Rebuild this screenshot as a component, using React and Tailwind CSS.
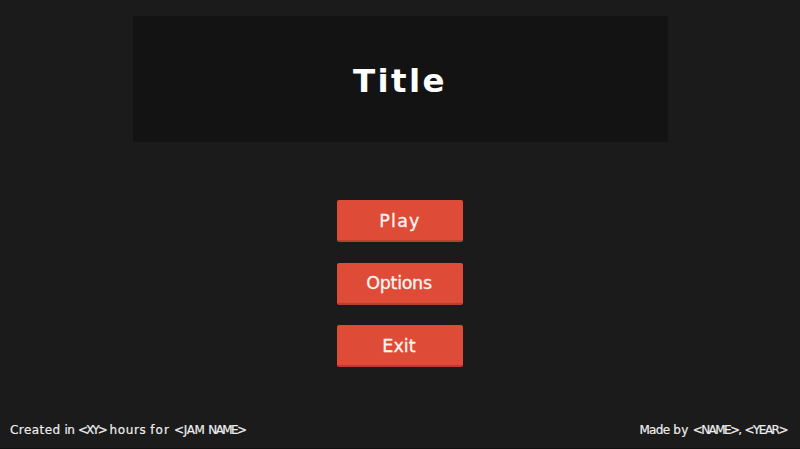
const buttons = [
  { label: "Play", tracking: "pt-[3px] tracking-[1.2px]" },
  { label: "Options", tracking: "pt-[2px] pr-[2px] tracking-[-0.3px]" },
  { label: "Exit", tracking: "pt-[2px] pr-[2px] tracking-[0.1px]" },
];

function MenuButton({ label, tracking }) {
  return (
    <button
      className={`flex h-[42px] w-[126px] items-center justify-center rounded-[2px] border-b-2 border-[#b5402f] bg-[#de4c37] text-[17.5px] leading-none text-[#fff5f2] [-webkit-text-stroke:0.3px_#fff5f2] ${tracking}`}
    >
      {label}
    </button>
  );
}

export default function App() {
  return (
    <main className="flex h-[449px] w-[800px] flex-col items-center overflow-hidden bg-[#1b1b1b] pt-4 font-['DejaVu_Sans',sans-serif] text-white">
      <header className="flex h-[126px] w-[535px] items-center justify-center bg-[#131313] pt-[5px]">
        <h1 className="text-[32.5px] leading-none font-bold tracking-[2.4px]">Title</h1>
      </header>
      <nav className="mt-[58px] flex flex-col gap-[20.7px]">
        {buttons.map((button) => (
          <MenuButton key={button.label} {...button} />
        ))}
      </nav>
      <footer className="mt-auto flex w-full justify-between border-b border-[#111111] pr-[13px] pb-[11px] pl-[10px] text-[12px] leading-[14px] whitespace-nowrap text-[#eeeeee] [-webkit-text-stroke:0.2px_#eeeeee]">
        <p>
          <span className="tracking-[0.45px]">Created</span>{" "}
          <span className="tracking-[-0.6px]">in</span>{" "}
          <span className="tracking-[-2px]">&lt;XY&gt;</span>{" "}
          <span className="tracking-[0.6px]">hours</span>{" "}
          <span className="tracking-[1.2px]">for</span>{" "}
          <span className="tracking-[-0.4px]">&lt;JAM</span>{" "}
          <span className="tracking-[-1.6px]">NAME&gt;</span>
        </p>
        <p>
          <span className="tracking-[-0.7px]">Made</span>{" "}
          <span className="tracking-[0.5px]">by</span>{" "}
          <span className="tracking-[-1.6px]">&lt;NAME&gt;,</span>{" "}
          <span className="tracking-[-1.5px]">&lt;YEAR&gt;</span>
        </p>
      </footer>
    </main>
  );
}
